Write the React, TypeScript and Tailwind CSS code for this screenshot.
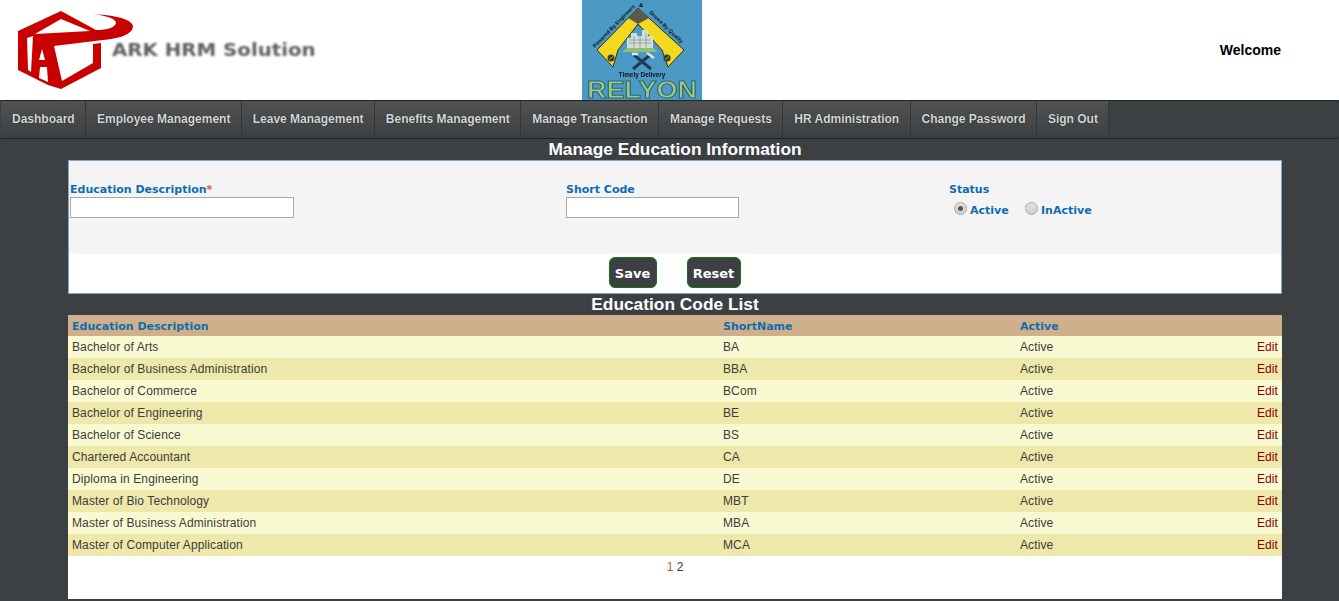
import { useState } from "react";

const NAV_ITEMS = [
  "Dashboard",
  "Employee Management",
  "Leave Management",
  "Benefits Management",
  "Manage Transaction",
  "Manage Requests",
  "HR Administration",
  "Change Password",
  "Sign Out",
];

const ROWS = [
  ["Bachelor of Arts", "BA"],
  ["Bachelor of Business Administration", "BBA"],
  ["Bachelor of Commerce", "BCom"],
  ["Bachelor of Engineering", "BE"],
  ["Bachelor of Science", "BS"],
  ["Chartered Accountant", "CA"],
  ["Diploma in Engineering", "DE"],
  ["Master of Bio Technology", "MBT"],
  ["Master of Business Administration", "MBA"],
  ["Master of Computer Application", "MCA"],
];

function ArkLogo() {
  return (
    <svg width="130" height="90" viewBox="0 0 130 90" className="shrink-0">
      <path d="M51 6 L8 26 V65 L38 80 L51 84 L91 63 V38 L83 39 V58 L52 76 L44 41 L93 35 Q123 32 123 21 Q120 11 83 9 Q106 12 106 18 Q104 25 86 25 Z" fill="#c80000" />
      <path d="M51 14 L25 29 L80 26 Z" fill="#ffffff" />
      <path d="M17 33 L23 31 L21 67 L18 65 Z" fill="#ffffff" />
      <path d="M32 44 L35 55 L29 55 Z" fill="#ffffff" />
      <path d="M30 62 L37 62 L38 77 L29 73 Z" fill="#ffffff" />
    </svg>
  );
}

function RelyonLogo() {
  return (
    <svg width="120" height="100" viewBox="0 0 120 100" className="block bg-[#4b9ac6]">
      <defs>
        <path id="arc-left" d="M13 48 L53 7" />
        <path id="arc-right" d="M67 13 L106 50" />
      </defs>
      <g className="blur-[0.4px]">
        <path d="M56 8 L102 50 L86 67 L80 50 L56 24 L36 50 L31 67 L15 50 Z" fill="#f2d91f" stroke="#2b2b20" strokeWidth="1" />
        <path d="M56 8 L67 18 L56 24 L46 18 Z" fill="#5b5a4c" />
        <circle cx="29" cy="58" r="3.5" fill="#3b3a28" />
        <circle cx="85" cy="58" r="3.5" fill="#3b3a28" />
        <path d="M27 59.5 L31 56.5 M83 59.5 L87 56.5" stroke="#d8c83a" strokeWidth="0.8" />
        <path d="M40 52 L76 52 L70 47 L46 47 Z" fill="#8fbf78" />
        <path d="M45 48 V38 H49 V33 H55 V36 H60 V30 H66 V36 H71 V48 Z" fill="#d3dcd8" />
        <path d="M47 40 H69 M47 43 H69 M52 36 V48 M58 34 V48 M64 33 V48" stroke="#8a9a96" strokeWidth="0.8" />
        <path d="M52 55 L69 69 M68 55 L51 69" stroke="#1f3b57" strokeWidth="3" />
        <path d="M50 54 L56 54 M65 53 L72 58" stroke="#dfe7ea" strokeWidth="2.5" />
        <text x="60" y="77" textAnchor="middle" fontFamily="Liberation Sans, sans-serif" fontSize="6.4" fontWeight="700" fill="#101010">Timely Delivery</text>
        <text x="60" y="98" textAnchor="middle" textLength="110" lengthAdjust="spacingAndGlyphs" fontFamily="Liberation Sans, sans-serif" fontSize="23" fontWeight="700" fill="#9ccb84" stroke="#2f6470" strokeWidth="1">RELYON</text>
      </g>
      <text fontFamily="Liberation Sans, sans-serif" fontSize="5.3" fontWeight="700" fill="#101010">
        <textPath href="#arc-left">Powered By Engineers</textPath>
      </text>
      <text x="57" y="7" fontFamily="Liberation Sans, sans-serif" fontSize="6" fontWeight="700" fill="#101010">&amp;</text>
      <text fontFamily="Liberation Sans, sans-serif" fontSize="5.3" fontWeight="700" fill="#101010">
        <textPath href="#arc-right">Driven By Quality</textPath>
      </text>
    </svg>
  );
}

function RadioOption({ label, checked, onSelect, className }: { label: string; checked: boolean; onSelect: () => void; className: string }) {
  return (
    <button type="button" role="radio" aria-checked={checked} onClick={onSelect} className={`flex items-start ${className}`}>
      <span className="mt-[-1px] flex h-[13px] w-[13px] items-center justify-center rounded-full border border-[#a9a9a9] bg-gradient-to-b from-[#e2e2e2] to-[#cfcfcf]">
        {checked && <span className="h-[5px] w-[5px] rounded-full bg-[#555555]" />}
      </span>
      <span className="ml-[3px]">{label}</span>
    </button>
  );
}

export default function App() {
  const [desc, setDesc] = useState("");
  const [code, setCode] = useState("");
  const [active, setActive] = useState(true);

  return (
    <div className="min-h-[601px] bg-[#3d4043] pb-[2px] font-['Liberation_Sans',sans-serif]">
      {/* Header */}
      <header className="flex h-[100px] items-start bg-white">
        <div className="flex w-[582px] items-start pl-[10px] pt-[5px]">
          <ArkLogo />
          <span className="ml-[-28px] mt-[35px] origin-left scale-x-[1.13] font-['DejaVu_Sans',sans-serif] text-[17.5px] leading-[20px] font-bold whitespace-nowrap text-[#5f5f5f] blur-[1px]">ARK HRM Solution</span>
        </div>
        <RelyonLogo />
        <span className="ml-auto mr-[58px] mt-[40px] text-[14px] leading-[20px] font-bold text-black">Welcome</span>
      </header>

      {/* Nav */}
      <nav className="flex h-[39px] rounded-[3px] border-y border-[#1f2123] bg-[#3d4043] pl-px">
        {NAV_ITEMS.map((item) => (
          <a
            key={item}
            href="#"
            className="flex items-center border-r border-[#333537] bg-gradient-to-b from-[#505252] to-[#3d4042] pb-[2px] pl-[11px] pr-[10.35px] text-[12px] font-bold text-[#d6d8d8] [text-shadow:0_0_1px_#000]"
          >
            {item}
          </a>
        ))}
      </nav>

      <main className="mx-[68px] w-[1214px]">
        <h1 className="h-[21px] text-center text-[17.33px] leading-[21px] font-bold text-white">Manage Education Information</h1>

        {/* Form */}
        <form className="h-[134px] border border-[#7aa7d4] bg-white" onSubmit={(e) => e.preventDefault()}>
          <div className="grid h-[93px] grid-cols-[496px_383px_1fr] bg-[#f4f4f4] pl-px pt-[21px] font-['DejaVu_Sans',sans-serif] text-[11px] font-bold text-[#0f6cb0]">
            <div>
              <label className="block h-[15px] leading-[15px]">
                Education Description<span className="text-[#ff4a1c]">*</span>
              </label>
              <input value={desc} onChange={(e) => setDesc(e.target.value)} className="block h-[21px] w-[224px] border border-[#a9a9a9] bg-white" />
            </div>
            <div>
              <label className="block h-[15px] leading-[15px]">Short Code</label>
              <input value={code} onChange={(e) => setCode(e.target.value)} className="block h-[21px] w-[173px] border border-[#a9a9a9] bg-white" />
            </div>
            <div>
              <span className="block h-[15px] leading-[15px]">Status</span>
              <div className="mt-[6px] flex pl-[5px]" role="radiogroup">
                <RadioOption label="Active" checked={active} onSelect={() => setActive(true)} className="w-[71px]" />
                <RadioOption label="InActive" checked={!active} onSelect={() => setActive(false)} className="" />
              </div>
            </div>
          </div>
          <div className="flex justify-center gap-[30px] pt-[3px] pr-[1px] font-['DejaVu_Sans',sans-serif] text-[13px] font-bold text-white">
            <button className="h-[31px] w-[48px] rounded-[6px] border border-[#0f7a0f] bg-[#3d4043] pt-[2px]">Save</button>
            <button className="h-[31px] w-[54px] rounded-[6px] border border-[#0f7a0f] bg-[#3d4043] pt-[2px]">Reset</button>
          </div>
        </form>

        <h2 className="h-[21px] text-center text-[17.33px] leading-[21px] font-bold text-white">Education Code List</h2>

        {/* Table */}
        <div className="h-[284px] bg-white">
          <table className="w-full table-fixed border-collapse text-[12px] tracking-[0.11px] text-[#3c3c3c]">
            <thead>
              <tr className="h-[21px] bg-[#cfb08a] text-left font-['DejaVu_Sans',sans-serif] text-[11px] font-bold tracking-normal text-[#0f6cb0]">
                <th className="w-[651px] pl-[4px] pt-[4px] font-bold">Education Description</th>
                <th className="w-[297px] pl-[4px] pt-[4px] font-bold">ShortName</th>
                <th className="pl-[4px] pt-[4px] font-bold">Active</th>
                <th className="w-[60px]" />
              </tr>
            </thead>
            <tbody>
              {ROWS.map(([name, short], i) => (
                <tr key={short} className={`h-[22px] ${i % 2 === 0 ? "bg-[#fafad2]" : "bg-[#eee8aa]"}`}>
                  <td className="pl-[4px]">{name}</td>
                  <td className="pl-[4px]">{short}</td>
                  <td className="pl-[4px]">Active</td>
                  <td className="pr-[4px] text-right text-[#8b0000]">Edit</td>
                </tr>
              ))}
            </tbody>
          </table>
          <div className="pt-[3px] text-center text-[12px] leading-[16px] text-[#2c3550]">
            <span className="text-[#9a6a2a]">1</span> <span>2</span>
          </div>
        </div>
      </main>
    </div>
  );
}
